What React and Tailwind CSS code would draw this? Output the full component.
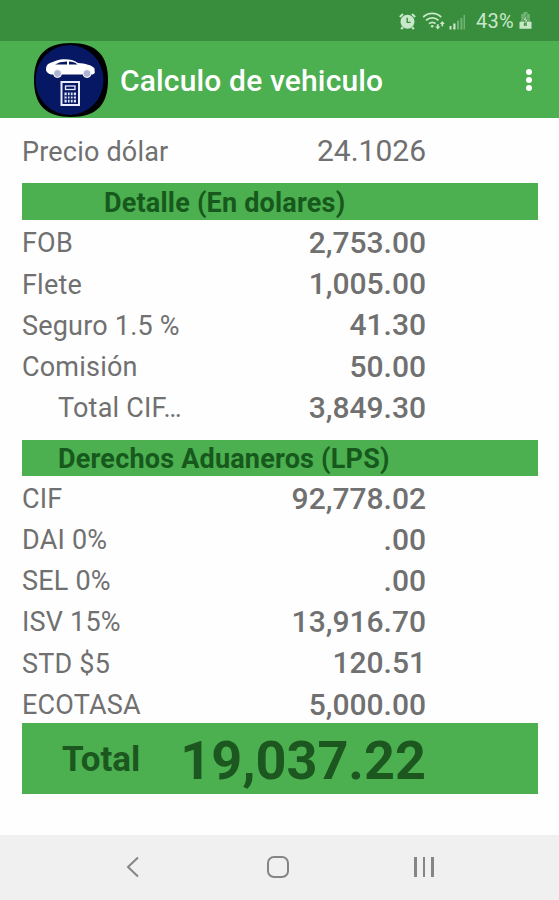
const DOLLAR_ROWS = [
    { label: "FOB", value: "2,753.00" },
    { label: "Flete", value: "1,005.00" },
    { label: "Seguro 1.5 %", value: "41.30" },
    { label: "Comisión", value: "50.00" },
    { label: "Total CIF…", value: "3,849.30", indent: true },
];

const CUSTOMS_ROWS = [
    { label: "CIF", value: "92,778.02" },
    { label: "DAI 0%", value: ".00" },
    { label: "SEL 0%", value: ".00" },
    { label: "ISV 15%", value: "13,916.70" },
    { label: "STD $5", value: "120.51" },
    { label: "ECOTASA", value: "5,000.00" },
];

function StatusBar() {
    return (
        <div className="flex h-[41px] shrink-0 items-center bg-[#388e3c] pl-[398px] text-[#c9e8ca]">
            <svg width="19" height="20" viewBox="0 0 19 20" fill="none" stroke="currentColor">
                <path d="M1.8 6L5 3M17.2 6L14 3" strokeWidth="2" />
                <circle cx="9.5" cy="10.8" r="7" fill="currentColor" stroke="none" />
                <path d="M4.8 16.2l-1.6 1.9M14.2 16.2l1.6 1.9" strokeWidth="2.2" />
                <path d="M9.2 6.8v4.6h3.4" stroke="#388e3c" strokeWidth="1.4" />
            </svg>
            <svg className="ml-[5px]" width="24" height="20" viewBox="0 0 24 20" fill="none" stroke="currentColor" strokeWidth="1.8">
                <path d="M1.2 6c5-4.8 13-4.8 18 0M4 9.4c3.6-3.4 9-3.4 12.5 0M7 12.7c2-1.9 4.7-1.9 6.5 0" />
                <circle cx="10.2" cy="15.3" r="1.3" fill="currentColor" stroke="none" />
                <path d="M15.8 18.5l-2.5-3h1.6v-2.2h1.8v2.2h1.6zM20.3 10l2.5 3h-1.6v2.2h-1.8V13h-1.6z" fill="currentColor" stroke="none" />
            </svg>
            <svg className="ml-[3px]" width="17" height="20" viewBox="0 0 17 20" fill="currentColor">
                <path d="M.5 15h2v3.500h-2zM4.300 12.500h2.200v6H4.300z" />
                <path d="M8 9.500h2v9H8zM11.400 7h2v11.500h-2zM14.500 4h1.500v14.500h-1.500z" opacity=".4" />
            </svg>
            <span className="ml-[10px] text-[20px] leading-none tracking-[0.3px]">43%</span>
            <svg className="ml-[5px]" width="13" height="19" viewBox="0 0 13 19" fill="currentColor">
                <path d="M4.5 1h4v2h2.300v7H2.200V3h2.300z" opacity=".4" />
                <path d="M1.500 10.500h10l1 1v6.300H.5v-6.300z" />
                <path d="M7.800 3.500L3.800 9.300h2.500L5 14.200l4.400-6H6.900z" stroke="#388e3c" strokeWidth=".7" />
                <path d="M5 12h3v3H5z" fill="#388e3c" opacity=".7" />
            </svg>
        </div>
    );
}

function AppIcon() {
    return (
        <svg width="76" height="76" viewBox="0 0 76 76">
            <path d="M38 1C63 1 75 13 75 38S63 75 38 75 1 63 1 38 13 1 38 1z" fill="#000" />
            <ellipse cx="36.5" cy="38" rx="34" ry="35" fill="#061763" />
            <path d="M13 27.500c0-3 1-5.500 4-6.500l6-2.200c7-2.300 16-2 22 2.200 7 .5 14 2 16.500 5.500l.3 4.500-2 1.500H18c-3-1-5-2.500-5-5z" fill="#fff" />
            <path d="M22 22.500l5-2.300 7-.7v3zM36 19.500c3.500 0 6 .8 8.500 3H36z" fill="#061763" />
            <g fill="#aeb5d2" stroke="#fff">
                <circle cx="24.500" cy="31.500" r="4" />
                <circle cx="54" cy="31.500" r="4" />
            </g>
            <rect x="28.500" y="40" width="17.500" height="23" fill="#061763" stroke="#e8ecff" strokeWidth="2" />
            <rect x="32.500" y="44" width="9.500" height="3.500" fill="#061763" stroke="#e8ecff" strokeWidth="1.300" />
            <path d="M31.500 50.500h11.500v10H31.500z" fill="#dfe4fa" />
            <path d="M34.300 50v11M37.200 50v11M40.200 50v11M31.500 53.800h11.500M31.500 57.200h11.500" stroke="#061763" strokeWidth="1.2" />
        </svg>
    );
}

function AppBar() {
    return (
        <header className="flex h-[77px] shrink-0 items-center bg-[#4caf50] pl-[33px] text-white">
            <AppIcon />
            <h1 className="mt-[2px] ml-[11px] text-[30px] font-medium tracking-[0.15px] whitespace-nowrap">
                Calculo de vehiculo
            </h1>
            <button className="mr-[27px] ml-auto flex flex-col gap-[2px]">
                <span className="size-1.5 rounded-full bg-white" />
                <span className="size-1.5 rounded-full bg-white" />
                <span className="size-1.5 rounded-full bg-white" />
            </button>
        </header>
    );
}

function SectionTitle({ className, children }) {
    return (
        <h2 className={`flex items-center bg-[#4caf50] pt-[3px] text-[27px] font-bold tracking-[0.2px] text-[#17591c] ${className}`}>
            {children}
        </h2>
    );
}

function Row({ label, value, indent }) {
    return (
        <div className="flex h-[41.2px] items-center justify-between pr-[112px]">
            <span className={`pt-[2px] text-[27px] tracking-[0.2px] ${indent ? "pl-9" : ""}`}>{label}</span>
            <span className="text-[30px] font-medium">{value}</span>
        </div>
    );
}

function NavBar() {
    return (
        <nav className="mt-auto flex h-[65px] shrink-0 items-center bg-[#f0f0f0] pb-[2px] pl-[126px] text-[#858585]">
            <svg width="13" height="22" viewBox="0 0 13 22" fill="none" stroke="currentColor" strokeWidth="2">
                <path d="M12 1.500L2 11l10 9.500" />
            </svg>
            <span className="ml-[128px] size-[22px] rounded-[7px] border-2 border-[#858585]" />
            <span className="ml-[125px] flex gap-[6px]">
                <span className="h-5 w-[2.5px] bg-[#858585]" />
                <span className="h-5 w-[2.5px] bg-[#858585]" />
                <span className="h-5 w-[2.5px] bg-[#858585]" />
            </span>
        </nav>
    );
}

export default function App() {
    return (
        <div className="flex h-[900px] w-[559px] flex-col overflow-hidden bg-[#fefefe] font-[Roboto,sans-serif] text-[#707070]">
            <StatusBar />
            <AppBar />
            <main className="pr-[21px] pl-[22px]">
                <div className="flex h-[65px] items-center justify-between pr-[112px]">
                    <span className="pt-[3px] text-[27px] tracking-[0.2px]">Precio dólar</span>
                    <span className="text-[30px]">24.1026</span>
                </div>
                <SectionTitle className="h-[37px] pl-[82px]">Detalle (En dolares)</SectionTitle>
                <div className="h-[220px] pt-[2px]">
                    {DOLLAR_ROWS.map((row) => (
                        <Row key={row.label} {...row} />
                    ))}
                </div>
                <SectionTitle className="h-[36px] pl-9">Derechos Aduaneros (LPS)</SectionTitle>
                <div className="h-[247px] pt-[1.5px]">
                    {CUSTOMS_ROWS.map((row) => (
                        <Row key={row.label} {...row} />
                    ))}
                </div>
                <div className="flex h-[71px] items-center justify-between bg-[#4caf50] pt-[4px] pr-[112px] pl-10 text-[#1b571e]">
                    <span className="text-[35px] font-bold">Total</span>
                    <span className="text-[54px] font-bold">19,037.22</span>
                </div>
            </main>
            <NavBar />
        </div>
    );
}
